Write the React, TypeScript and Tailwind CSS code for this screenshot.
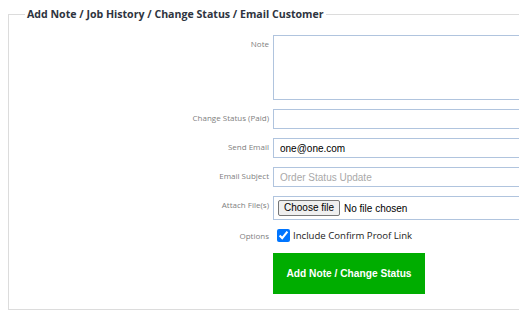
import React from "react";

export default function App() {
  const label =
    "text-right text-[8px] leading-[12px] text-[#808080] pt-[3px] pr-[4px] font-['Open_Sans',sans-serif]";
  const input =
    "block w-full h-[20px] border border-[#b0c4de] bg-white px-[6px] text-[10px] font-['Liberation_Sans',Arial,sans-serif] text-black outline-none placeholder:text-[#a9a9a9]";
  return (
    <div className="w-[519px] h-[319px] overflow-hidden bg-white">
      <div className="pl-[8px] pt-[6px]">
        <fieldset className="w-[560px] border border-[#dcdcdc] px-[16px] pt-[13px] pb-[15px]">
          <legend className="px-[2px] text-[10.6px] leading-[16px] font-bold text-[#2e3440] font-['Open_Sans',sans-serif]">
            Add Note / Job History / Change Status / Email Customer
          </legend>
          <div className="grid grid-cols-[248px_1fr] gap-y-[9px]">
            <div className={label}>Note</div>
            <textarea className="block w-full h-[65px] border border-[#b0c4de] bg-white resize-none outline-none" />

            <div className={label}>Change Status (Paid)</div>
            <input className={input} />

            <div className={label}>Send Email</div>
            <input className={input} defaultValue="one@one.com" />

            <div className={label}>Email Subject</div>
            <input className={input} placeholder="Order Status Update" />

            <div className={label}>Attach File(s)</div>
            <div className="h-[24px] border border-[#b0c4de] bg-white flex items-center px-[4px] font-['Liberation_Sans',Arial,sans-serif] text-black">
              <span className="inline-block border border-[#767676] bg-[#efefef] rounded-[2px] px-[5px] leading-[14px] text-[10px]">
                Choose file
              </span>
              <span className="ml-[4px] text-[10px]">No file chosen</span>
            </div>

            <div className={label + " !pt-[1px]"}>Options</div>
            <label className="flex items-center pl-[4px] h-[16px] -mt-[2px] text-[9.6px] text-[#222] font-['Open_Sans',sans-serif]">
              <input type="checkbox" defaultChecked className="w-[13px] h-[13px] m-0 accent-[#0075ff]" />
              <span className="ml-[3px] mt-[2px]">Include Confirm Proof Link</span>
            </label>

            <div />
            <div className="pt-[1px]">
              <button className="w-[152px] h-[41px] bg-[#00ad00] text-white font-bold text-[10.2px] font-['Liberation_Sans',Arial,sans-serif]">
                Add Note / Change Status
              </button>
            </div>
          </div>
        </fieldset>
      </div>
    </div>
  );
}
